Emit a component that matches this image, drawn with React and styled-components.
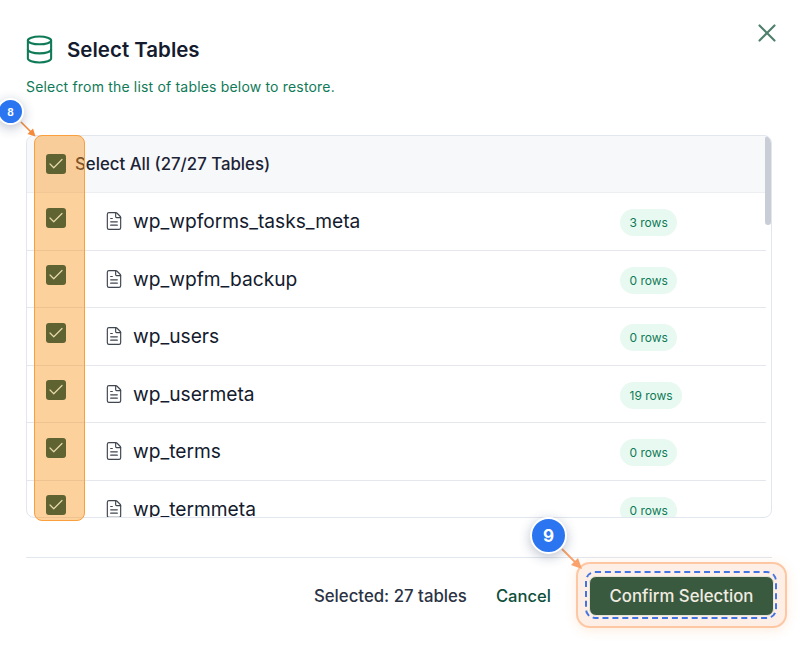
import React from "react";
import styled, { createGlobalStyle } from "styled-components";
import { Database, FileText, X, Check } from "lucide-react";

const TABLES = [
  ["wp_wpforms_tasks_meta", 3],
  ["wp_wpfm_backup", 0],
  ["wp_users", 0],
  ["wp_usermeta", 19],
  ["wp_terms", 0],
  ["wp_termmeta", 0],
];

function Box({ raised }) {
  return (
    <CheckBox $raised={raised}>
      <Check size={18} strokeWidth={1.6} color="#e8d9a8" />
    </CheckBox>
  );
}

export default function App() {
  return (
    <Modal>
      <GlobalStyle />
      <CloseButton>
        <X size={30} strokeWidth={1.7} color="#4f806b" />
      </CloseButton>
      <TitleRow>
        <Database size={31} strokeWidth={1.6} color="#0f7a57" />
        <Title>Select Tables</Title>
      </TitleRow>
      <Subtitle>Select from the list of tables below to restore.</Subtitle>

      <TableBox>
        <TableList>
          <SelectAllRow>
            <Box />
            <SelectAllText>Select All (27/27 Tables)</SelectAllText>
          </SelectAllRow>
          {TABLES.map(([name, rows]) => (
            <TableRow key={name}>
              <Box raised />
              <FileIcon>
                <FileText size={20} strokeWidth={1.4} color="#3f4650" />
              </FileIcon>
              <TableName>{name}</TableName>
              <RowsPill>{rows} rows</RowsPill>
            </TableRow>
          ))}
        </TableList>
        <ScrollThumb />
      </TableBox>

      <Footer>
        <SelectedText>Selected: 27 tables</SelectedText>
        <CancelButton>Cancel</CancelButton>
        <ConfirmWrap>
          <ConfirmHighlight />
          <DashedRing />
          <ConfirmButton>Confirm Selection</ConfirmButton>
        </ConfirmWrap>
      </Footer>

      <ColumnHighlight />
      <Arrow $left={18} $top={119} width="22" height="22" viewBox="0 0 22 22">
        <line x1="3" y1="3" x2="13" y2="13" stroke="#f58a3c" strokeWidth="1.6" />
        <path d="M17.5 17.5 L9.5 15 L15 9.5 Z" fill="#f58a3c" />
      </Arrow>
      <Arrow $left={558} $top={545} width="28" height="28" viewBox="0 0 28 28">
        <line x1="4" y1="4" x2="18" y2="18" stroke="#f9a26c" strokeWidth="2" />
        <path d="M24 24 L13 20 L20 13 Z" fill="#f9a26c" />
      </Arrow>
      <StepBadge $size={27} $left={-3} $top={98} $font={10}>8</StepBadge>
      <StepBadge $size={37} $left={530} $top={517} $font={17}>9</StepBadge>
    </Modal>
  );
}

const GlobalStyle = createGlobalStyle`
  html, body {
    margin: 0;
    padding: 0;
    background: #fff;
  }
  * {
    box-sizing: border-box;
  }
`;

const Modal = styled.div`
  position: relative;
  width: 800px;
  height: 645px;
  overflow: hidden;
  padding: 34px 28px 0 26px;
  background: #fff;
  font-family: Inter, "Liberation Sans", sans-serif;
  color: #111a2e;
`;

const CloseButton = styled.div`
  position: absolute;
  top: 18px;
  left: 752px;
  width: 30px;
  height: 30px;
`;

const TitleRow = styled.div`
  display: flex;
  align-items: center;
  gap: 12px;
  height: 31px;
  margin-left: -2px;
`;

const Title = styled.h2`
  margin: 0;
  font-size: 20.5px;
  line-height: 31px;
  font-weight: 600;
  color: #141b2e;
`;

const Subtitle = styled.p`
  margin: 13px 0 0;
  font-size: 14px;
  line-height: 18px;
  letter-spacing: 0.18px;
  color: #0f7a57;
`;

const TableBox = styled.div`
  position: relative;
  margin-top: 39px;
  height: 383px;
  border: 1px solid #e2e6ee;
  border-radius: 8px;
  overflow: hidden;
`;

const TableList = styled.div`
  height: 100%;
  margin-right: 5px;
  overflow: hidden;
`;

const ScrollThumb = styled.div`
  position: absolute;
  top: 0;
  right: 0;
  width: 6px;
  height: 89px;
  border-radius: 3px;
  background: #c9ced6;
`;

const SelectAllRow = styled.div`
  display: flex;
  align-items: center;
  gap: 9px;
  height: 57.2px;
  padding-left: 19px;
  background: #f7f8fa;
  border-bottom: 1px solid #eceef2;
`;

const SelectAllText = styled.span`
  font-size: 16.8px;
  font-weight: 500;
  color: #1b2335;
`;

const TableRow = styled.div`
  display: flex;
  align-items: center;
  height: 57.5px;
  padding-left: 19px;
  border-bottom: 1px solid #e4e7ec;
`;

const CheckBox = styled.span`
  position: relative;
  z-index: 3;
  flex: none;
  display: flex;
  align-items: center;
  justify-content: center;
  width: 20px;
  height: 20px;
  margin-bottom: ${(p) => (p.$raised ? "7px" : "0")};
  border-radius: 3px;
  background: #5f6231;
`;

const FileIcon = styled.span`
  display: flex;
  flex: none;
  margin-left: 37.5px;
`;

const TableName = styled.span`
  flex: none;
  width: 487px;
  margin-left: 9.5px;
  font-size: 19.2px;
  color: #141b2e;
`;

const RowsPill = styled.span`
  flex: none;
  height: 27px;
  margin-top: 3px;
  padding: 0 9.5px;
  border-radius: 14px;
  background: #e8f9f1;
  color: #0f7a57;
  font-size: 12px;
  line-height: 27px;
`;

const Footer = styled.div`
  display: flex;
  align-items: center;
  justify-content: flex-end;
  height: 59px;
  margin-top: 39px;
  padding-top: 17px;
  border-top: 1px solid #e2e6ee;
`;

const SelectedText = styled.span`
  font-size: 16.8px;
  font-weight: 500;
  color: #2b3344;
`;

const CancelButton = styled.span`
  margin-left: 29px;
  font-size: 16.6px;
  font-weight: 500;
  color: #0e4f3c;
`;

const ConfirmWrap = styled.div`
  position: relative;
  margin-left: 38px;
  margin-right: -2px;
`;

const ConfirmHighlight = styled.div`
  position: absolute;
  inset: -14px -13px -12px -13px;
  border: 2px solid #fdc7a3;
  border-radius: 14px;
  background: #fdeee6;
  box-shadow: 0 2px 12px rgba(251, 146, 60, 0.18);
`;

const DashedRing = styled.div`
  position: absolute;
  inset: -5px -3px -3px -4px;
  border: 2px dashed #4374e4;
  border-radius: 10px;
`;

const ConfirmButton = styled.button`
  position: relative;
  display: block;
  width: 185px;
  height: 40px;
  border: 1px solid #e6e4d8;
  border-radius: 7px;
  background: #3a5a40;
  color: #f1ece0;
  font-family: inherit;
  font-size: 16.8px;
  font-weight: 500;
`;

const ColumnHighlight = styled.div`
  position: absolute;
  z-index: 2;
  left: 34px;
  top: 135px;
  width: 51px;
  height: 386px;
  border: 1px solid #fb9e3c;
  border-radius: 8px;
  background: rgba(251, 150, 30, 0.44);
`;

const Arrow = styled.svg`
  position: absolute;
  z-index: 4;
  left: ${(p) => p.$left}px;
  top: ${(p) => p.$top}px;
`;

const StepBadge = styled.div`
  position: absolute;
  z-index: 5;
  left: ${(p) => p.$left}px;
  top: ${(p) => p.$top}px;
  width: ${(p) => p.$size}px;
  height: ${(p) => p.$size}px;
  display: flex;
  align-items: center;
  justify-content: center;
  border: 2px solid #fff;
  border-radius: 50%;
  background: #2b75f0;
  color: #fff;
  font-size: ${(p) => p.$font}px;
  font-weight: 700;
  box-shadow: 0 3px 12px rgba(30, 50, 90, 0.3);
`;
